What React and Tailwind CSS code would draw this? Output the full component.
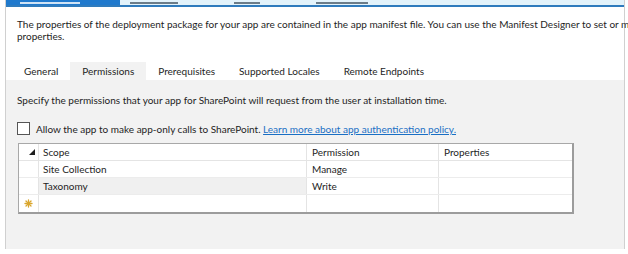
import React from "react";

const tabs = ["General", "Permissions", "Prerequisites", "Supported Locales", "Remote Endpoints"];

const rows = [
  { scope: "Site Collection", permission: "Manage" },
  { scope: "Taxonomy", permission: "Write", current: true },
];

const SortGlyph = () => (
  <svg width="6" height="6" viewBox="0 0 6 6" className="shrink-0">
    <polygon points="6,0 6,6 0,6" fill="#1e1e1e" />
  </svg>
);

const NewRowStar = () => (
  <svg width="9" height="9" viewBox="0 0 9 9">
    <g stroke="#d9a62e" strokeWidth="1.3" strokeLinecap="round">
      <line x1="4.5" y1="1" x2="4.5" y2="8" />
      <line x1="1" y1="4.5" x2="8" y2="4.5" />
      <line x1="2" y1="2" x2="7" y2="7" />
      <line x1="7" y1="2" x2="2" y2="7" />
    </g>
  </svg>
);

// cut-off labels of the document tabs above, only their lower edge shows
const TabStub = ({ w }) => <div className={"h-[2px] mt-[2px] bg-[#6b7c88] " + w} />;

export default function App() {
  return (
    <div className="w-[628px] h-[254px] bg-white overflow-hidden font-['Lato',sans-serif] text-[10px] leading-[12px] text-[#1e1e1e]">
      <div className="ml-[5px] w-[620px] h-[249px] border-l border-r border-[#d0d0d0] flex flex-col">
        {/* document tab strip, cut off at the top */}
        <div className="h-[5px] flex">
          <div className="w-[114px] bg-[#1f79cd] flex gap-[10px] pl-[14px]">
            <div className="h-[2px] mt-[2px] w-[60px] bg-[#cfe3f5]" />
          </div>
          <div className="flex-1 bg-[#e3f3fb] flex pl-[10px] gap-[56px]">
            <TabStub w="w-[48px]" />
            <TabStub w="w-[26px]" />
            <TabStub w="w-[52px]" />
          </div>
        </div>
        <div className="h-[2px] bg-[#2f7bbd]" />

        <div className="pl-[11px] pt-[11px]">
          <p className="whitespace-nowrap">
            The properties of the deployment package for your app are contained in the app manifest file. You can use the Manifest Designer to set or modify
          </p>
          <p>properties.</p>
        </div>

        <div className="mt-[20px] flex h-[18px] pl-[6px]">
          {tabs.map((t) => (
            <div
              key={t}
              className={
                "px-[12px] flex items-center " +
                (t === "Permissions" ? "bg-[#f2f2f2]" : "")
              }
            >
              {t}
            </div>
          ))}
        </div>

        <div className="flex-1 bg-[#f2f2f2] pt-[14px] pl-[11px]">
          <p>Specify the permissions that your app for SharePoint will request from the user at installation time.</p>

          <div className="mt-[16px] flex items-center">
            <div className="w-[13px] h-[13px] border border-[#555] bg-white" />
            <span className="ml-[6px]">
              Allow the app to make app-only calls to SharePoint.{" "}
              <span className="text-[#1a6fc4] underline">Learn more about app authentication policy.</span>
            </span>
          </div>

          <div className="mt-[8px] ml-[1px] w-[556px] bg-white border border-[#a8a8a8] border-r-2 border-b-2 border-r-[#9c9c9c] border-b-[#9c9c9c]">
            <div className="flex h-[17px] border-b border-[#e4e4e4]">
              <div className="w-[20px] flex items-center justify-end pr-[3px] border-r border-[#e4e4e4]">
                <SortGlyph />
              </div>
              <div className="w-[268px] pl-[4px] flex items-center border-r border-[#e4e4e4]">Scope</div>
              <div className="w-[132px] pl-[5px] flex items-center border-r border-[#e4e4e4]">Permission</div>
              <div className="flex-1 pl-[5px] flex items-center">Properties</div>
            </div>
            {rows.map((r) => (
              <div key={r.scope} className="flex h-[17px] border-b border-[#ececec]">
                <div className="w-[20px] border-r border-[#e4e4e4]" />
                <div
                  className={
                    "w-[268px] pl-[4px] flex items-center border-r border-[#e4e4e4] " +
                    (r.current ? "bg-[#f0f0f0]" : "")
                  }
                >
                  {r.scope}
                </div>
                <div className="w-[132px] pl-[5px] flex items-center border-r border-[#e4e4e4]">{r.permission}</div>
                <div className="flex-1" />
              </div>
            ))}
            <div className="flex h-[17px]">
              <div className="w-[20px] flex items-center justify-center border-r border-[#e4e4e4]">
                <NewRowStar />
              </div>
              <div className="w-[268px] border-r border-[#e4e4e4]" />
              <div className="w-[132px] border-r border-[#e4e4e4]" />
              <div className="flex-1" />
            </div>
          </div>
        </div>
      </div>
    </div>
  );
}
